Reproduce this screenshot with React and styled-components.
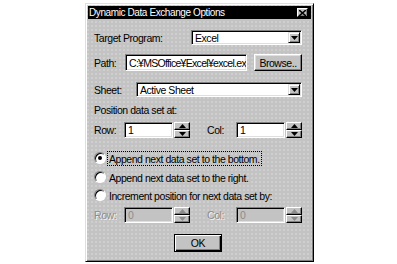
import styled, { createGlobalStyle } from "styled-components"

const GlobalStyle = createGlobalStyle`
  html, body {
    margin: 0;
    padding: 0;
    background: #fff;
  }
  body {
    font-family: "Liberation Sans", Arial, sans-serif;
    font-size: 10.5px;
    letter-spacing: -0.45px;
    color: #000;
  }
`

const Dialog = styled.div`
  width: 229px;
  height: 259px;
  margin: 3px 0 0 85px;
  box-sizing: border-box;
  padding: 2px;
  display: flex;
  flex-direction: column;
  background-color: #c3c3c3;
  background-image: radial-gradient(circle, #cfcfcf 0.7px, transparent 0.9px);
  background-size: 4px 4px;
  border: 1px solid;
  border-color: #dfdfdf #000 #000 #dfdfdf;
  box-shadow: inset 1px 1px #fff, inset -1px -1px #808080;
`
const TitleBar = styled.div`
  height: 13px;
  display: flex;
  align-items: center;
  justify-content: space-between;
  background: #000;
  color: #fff;
  padding: 0 3px 0 1px;
`
const TitleText = styled.span`
  font-size: 10px;
  letter-spacing: -0.4px;
  line-height: 13px;
`
const CloseBtn = styled.div`
  width: 11px;
  height: 9px;
  box-sizing: border-box;
  display: flex;
  align-items: center;
  justify-content: center;
  background: #c3c3c3;
  border: 1px solid;
  border-color: #fff #000 #000 #fff;
  box-shadow: inset -1px -1px #808080;
`
const Body = styled.div`
  display: flex;
  flex-direction: column;
  padding: 0 9px 0 6px;
`
const Row = styled.div`
  display: flex;
  align-items: center;
  height: ${p => p.$h}px;
  margin-top: ${p => p.$mt}px;
  justify-content: ${p => (p.$center ? "center" : "flex-start")};
`
const Label = styled.span`
  width: ${p => p.$w}px;
  flex-shrink: 0;
  white-space: nowrap;
  color: ${p => (p.$off ? "#8c8c8c" : "#000")};
  text-shadow: ${p => (p.$off ? "1px 1px #f4f4f4" : "none")};
`
const Sunken = styled.div`
  width: ${p => p.$w}px;
  height: 100%;
  box-sizing: border-box;
  flex-shrink: 0;
  display: flex;
  align-items: center;
  padding-left: 3px;
  background: ${p => (p.$off ? "#c3c3c3" : "#fff")};
  color: ${p => (p.$off ? "#8c8c8c" : "#000")};
  letter-spacing: ${p => (p.$tight ? "-0.7px" : "inherit")};
  border: 1px solid;
  border-color: #808080 #fff #fff #808080;
  box-shadow: inset 1px 1px #000, inset -1px -1px #dfdfdf;
  overflow: hidden;
  white-space: nowrap;
`
const ComboText = styled.span`
  flex: 1;
`
const DropBtn = styled.div`
  width: 12px;
  height: 11px;
  margin-right: 1px;
  box-sizing: border-box;
  display: flex;
  align-items: center;
  justify-content: center;
  background: #c3c3c3;
  border: 1px solid;
  border-color: #dfdfdf #000 #000 #dfdfdf;
  box-shadow: inset 1px 1px #fff, inset -1px -1px #808080;
`
const Button = styled.div`
  width: ${p => p.$w}px;
  height: 100%;
  box-sizing: border-box;
  flex-shrink: 0;
  display: flex;
  align-items: center;
  justify-content: center;
  background: #c3c3c3;
  border: 1px solid;
  border-color: ${p => (p.$default ? "#000" : "#fff #000 #000 #fff")};
  box-shadow: ${p =>
    p.$default
      ? "inset 1px 1px #fff, inset -1px -1px #000, inset -2px -2px #808080"
      : "inset -1px -1px #808080, inset 1px 1px #dfdfdf"};
  margin-left: ${p => p.$ml || 0}px;
`
const Spinner = styled.div`
  width: 16px;
  height: 100%;
  margin-left: 1px;
  flex-shrink: 0;
  display: flex;
  flex-direction: column;
`
const SpinHalf = styled.div`
  flex: 1;
  box-sizing: border-box;
  display: flex;
  align-items: center;
  justify-content: center;
  background: #c3c3c3;
  border: 1px solid;
  border-color: #fff #000 #000 #fff;
  box-shadow: inset -1px -1px #808080;
`
const Gap = styled.div`
  width: ${p => p.$w}px;
  flex-shrink: 0;
`
const Radio = styled.div`
  width: 12px;
  height: 12px;
  box-sizing: border-box;
  border-radius: 50%;
  background: #fff;
  border: 1px solid;
  border-color: #808080 #fff #fff #808080;
  box-shadow: inset 1px 1px #000;
  display: flex;
  align-items: center;
  justify-content: center;
  flex-shrink: 0;
`
const RadioDot = styled.div`
  width: 4px;
  height: 4px;
  border-radius: 50%;
  background: #000;
`
const RadioText = styled.span`
  margin-left: 2px;
  padding: 1px 1px 0;
  white-space: nowrap;
  outline: ${p => (p.$focus ? "1px dotted #000" : "none")};
`

const Tri = ({ up, off }) => (
  <svg width="7" height="4" viewBox="0 0 7 4">
    {up ? (
      <polygon points="3.5,0 7,4 0,4" fill={off ? "#8c8c8c" : "#000"} />
    ) : (
      <polygon points="0,0 7,0 3.5,4" fill={off ? "#8c8c8c" : "#000"} />
    )}
  </svg>
)

const Spin = ({ off }) => (
  <Spinner>
    <SpinHalf>
      <Tri up off={off} />
    </SpinHalf>
    <SpinHalf>
      <Tri off={off} />
    </SpinHalf>
  </Spinner>
)

const Combo = ({ w, text }) => (
  <Sunken $w={w}>
    <ComboText>{text}</ComboText>
    <DropBtn>
      <Tri />
    </DropBtn>
  </Sunken>
)

const SpinRow = ({ mt, off, row, col }) => (
  <Row $mt={mt} $h={16}>
    <Label $w={30} $off={off}>Row:</Label>
    <Sunken $w={49} $off={off}>{row}</Sunken>
    <Spin off={off} />
    <Gap $w={17} />
    <Label $w={29} $off={off}>Col:</Label>
    <Sunken $w={49} $off={off}>{col}</Sunken>
    <Spin off={off} />
  </Row>
)

export default function App() {
  return (
    <>
      <GlobalStyle />
      <Dialog>
        <TitleBar>
          <TitleText>Dynamic Data Exchange Options</TitleText>
          <CloseBtn>
            <svg width="7" height="6" viewBox="0 0 7 6">
              <path d="M0 0L7 6M7 0L0 6" stroke="#000" strokeWidth="1.6" />
            </svg>
          </CloseBtn>
        </TitleBar>
        <Body>
          <Row $mt={11} $h={15}>
            <Label $w={97}>Target Program:</Label>
            <Combo w={111} text="Excel" />
          </Row>
          <Row $mt={9} $h={17}>
            <Label $w={31}>Path:</Label>
            <Sunken $w={122} $tight>C:¥MSOffice¥Excel¥excel.exe</Sunken>
            <Button $w={48} $ml={7}>Browse..</Button>
          </Row>
          <Row $mt={11} $h={15}>
            <Label $w={42}>Sheet:</Label>
            <Combo w={166} text="Active Sheet" />
          </Row>
          <Row $mt={7} $h={12}>
            <Label>Position data set at:</Label>
          </Row>
          <SpinRow mt={6} row="1" col="1" />
          <Row $mt={13} $h={14}>
            <Radio>
              <RadioDot />
            </Radio>
            <RadioText $focus>Append next data set to the bottom.</RadioText>
          </Row>
          <Row $mt={5} $h={14}>
            <Radio />
            <RadioText>Append next data set to the right.</RadioText>
          </Row>
          <Row $mt={4} $h={14}>
            <Radio />
            <RadioText>Increment position for next data set by:</RadioText>
          </Row>
          <SpinRow mt={5} off row="0" col="0" />
          <Row $mt={11} $h={18} $center>
            <Button $w={48} $default>OK</Button>
          </Row>
        </Body>
      </Dialog>
    </>
  )
}
